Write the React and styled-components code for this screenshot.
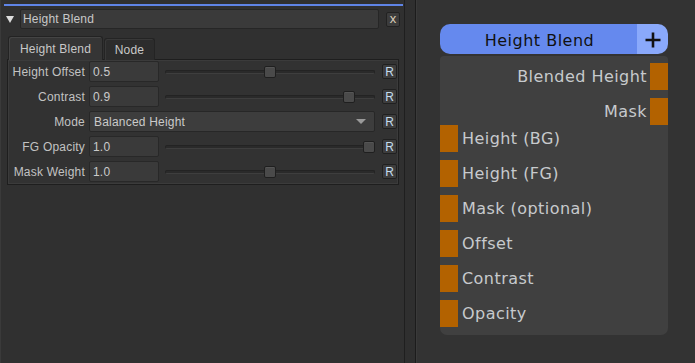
import React from "react";
import styled, { createGlobalStyle } from "styled-components";

const GlobalStyle = createGlobalStyle`
  html, body {
    margin: 0;
    padding: 0;
    background: #333333;
    overflow: hidden;
  }
  #root {
    width: 695px;
    height: 363px;
  }
`;

const Screen = styled.div`
  display: flex;
  width: 695px;
  height: 363px;
  font-family: "Liberation Sans", Arial, sans-serif;
  font-size: 12px;
  letter-spacing: 0.2px;
  color: #c4c4c4;
`;

const LeftPanel = styled.div`
  width: 405px;
  box-sizing: border-box;
  padding: 4px 1px 0 3px;
  background: #303030;
  border-left: 1px solid #3a3a3a;
  border-right: 1px solid #1f1f1f;
  display: flex;
  flex-direction: column;
`;

const BlueLine = styled.div`
  height: 2px;
  background: #5f84e6;
`;

const HeaderRow = styled.div`
  display: flex;
  align-items: center;
  height: 20px;
  margin-top: 3px;
`;

const Collapse = styled.div`
  width: 0;
  height: 0;
  margin: 0 6px 0 2px;
  border-left: 4px solid transparent;
  border-right: 4px solid transparent;
  border-top: 7px solid #dcdcdc;
`;

const TitleField = styled.div`
  flex: 1;
  height: 20px;
  box-sizing: border-box;
  display: flex;
  align-items: center;
  padding-left: 2px;
  background: #3a3a3a;
  border: 1px solid #262626;
  border-radius: 2px;
  color: #c8c8c8;
`;

const CloseButton = styled.div`
  width: 14px;
  height: 15px;
  box-sizing: border-box;
  margin: 0 3px 0 7px;
  display: flex;
  align-items: center;
  justify-content: center;
  background: #3c3c3c;
  border: 1px solid #222;
  border-radius: 2px;
  color: #d8cdb8;
  font-size: 13px;
  line-height: 1;
  padding-bottom: 2px;
`;

const TabBar = styled.div`
  display: flex;
  align-items: flex-end;
  margin-top: 7px;
  padding-left: 4px;
  height: 24px;
`;

const Tab = styled.div`
  height: ${p => (p.active ? "24px" : "22px")};
  width: ${p => p.width}px;
  box-sizing: border-box;
  margin-right: 1px;
  display: flex;
  align-items: center;
  justify-content: center;
  background: ${p => (p.active ? "#353535" : "#2c2c2c")};
  border: 1px solid ${p => (p.active ? "#232323" : "#242424")};
  border-bottom: none;
  border-radius: 3px 3px 0 0;
  box-shadow: inset 1px 1px 0 ${p => (p.active ? "#444" : "#383838")};
  color: #c8c8c8;
  position: relative;
  z-index: ${p => (p.active ? 2 : 1)};
`;

const Box = styled.div`
  margin: -1px 0 0 3px;
  width: 392px;
  box-sizing: border-box;
  border: 1px solid #1e1e1e;
  box-shadow: inset 0 0 0 1px #3b3b3b;
  background: #323232;
  padding: 1px 0 2px 0;
  display: flex;
  flex-direction: column;
  gap: 4px;
`;

const Row = styled.div`
  display: flex;
  align-items: center;
  height: 21px;
`;

const Label = styled.div`
  width: 77px;
  margin-right: 4px;
  text-align: right;
  white-space: nowrap;
  color: #c2c2c2;
`;

const ValueField = styled.div`
  width: 70px;
  height: 21px;
  box-sizing: border-box;
  display: flex;
  align-items: center;
  padding-left: 3px;
  background: #3a3a3a;
  border: 1px solid #282828;
  border-radius: 2px;
  color: #cacaca;
`;

const Slider = styled.div`
  position: relative;
  width: 210px;
  height: 12px;
  margin-left: 6px;
  display: flex;
  align-items: center;
`;

const Track = styled.div`
  width: 100%;
  height: 4px;
  box-sizing: border-box;
  background: #2a2a2a;
  border: 1px solid #232323;
  border-bottom-color: #3e3e3e;
  border-radius: 2px;
`;

const Thumb = styled.div`
  position: absolute;
  top: 0;
  width: 12px;
  height: 12px;
  box-sizing: border-box;
  background: #4a4a4a;
  border: 1px solid #1f1f1f;
  border-radius: 2px;
  box-shadow: inset 0 1px 0 #555;
`;

const Dropdown = styled.div`
  width: 286px;
  height: 21px;
  box-sizing: border-box;
  display: flex;
  align-items: center;
  justify-content: space-between;
  padding: 0 8px 0 4px;
  background: #3d3d3d;
  border: 1px solid #272727;
  border-radius: 2px;
  color: #cacaca;
`;

const Arrow = styled.div`
  width: 0;
  height: 0;
  border-left: 5px solid transparent;
  border-right: 5px solid transparent;
  border-top: 5px solid #9a9a9a;
`;

const ResetButton = styled.div`
  width: 15px;
  height: 15px;
  box-sizing: border-box;
  margin-left: 7px;
  display: flex;
  align-items: center;
  justify-content: center;
  background: #3d3d3d;
  border: 1px solid #202020;
  border-radius: 2px;
  color: #c4dcec;
  font-size: 12px;
  letter-spacing: 0;
`;

const Splitter = styled.div`
  width: 10px;
  background: #2f2f2f;
  border-right: 1px solid #1c1c1c;
`;

const Canvas = styled.div`
  flex: 1;
  position: relative;
  background: #333333;
  border-left: 1px solid #3a3a3a;
  font-family: "DejaVu Sans", Verdana, sans-serif;
`;

const Node = styled.div`
  position: absolute;
  left: 23px;
  top: 24px;
  width: 228px;
`;

const NodeHeader = styled.div`
  display: flex;
  height: 30px;
  border-radius: 10px;
  overflow: hidden;
`;

const NodeTitle = styled.div`
  flex: 1;
  display: flex;
  align-items: center;
  justify-content: center;
  padding: 3px 0 0 2px;
  background: #6589ee;
  color: #111;
  font-size: 16px;
  letter-spacing: 0.5px;
`;

const AddButton = styled.div`
  width: 31px;
  display: flex;
  align-items: center;
  justify-content: center;
  padding-top: 1px;
  background: #8aa9fb;
`;

const NodeBody = styled.div`
  margin-top: 2px;
  padding: 7px 0 8px;
  background: #404040;
  border-radius: 4px 4px 7px 7px;
  display: flex;
  flex-direction: column;
`;

const PortGroup = styled.div`
  display: flex;
  flex-direction: column;
  gap: 8px;
`;

const PortRow = styled.div`
  display: flex;
  align-items: center;
  justify-content: ${p => (p.output ? "flex-end" : "flex-start")};
  height: 27px;
  font-size: 16px;
  letter-spacing: 0.45px;
  color: #c7cacd;
`;

const Port = styled.div`
  width: 18px;
  height: 27px;
  background: #b36200;
  margin: ${p => (p.output ? "0 0 0 3px" : "0 4px 0 0")};
`;

const params = [
  { label: "Height Offset", value: 0.5, pos: 0.5 },
  { label: "Contrast", value: 0.9, pos: 0.9 },
  { label: "Mode", mode: "Balanced Height" },
  { label: "FG Opacity", value: 1.0, pos: 1.0 },
  { label: "Mask Weight", value: 1.0, pos: 0.5 },
];

const outputs = ["Blended Height", "Mask"];
const inputs = [
  "Height (BG)",
  "Height (FG)",
  "Mask (optional)",
  "Offset",
  "Contrast",
  "Opacity",
];

const ParamRow = ({ param }) => (
  <Row>
    <Label>{param.label}</Label>
    {param.mode ? (
      <Dropdown>
        {param.mode}
        <Arrow />
      </Dropdown>
    ) : (
      <>
        <ValueField>{param.value.toFixed(1)}</ValueField>
        <Slider>
          <Track />
          <Thumb style={{ left: `calc(${param.pos} * (100% - 12px))` }} />
        </Slider>
      </>
    )}
    <ResetButton>R</ResetButton>
  </Row>
);

export default function App() {
  return (
    <>
      <GlobalStyle />
      <Screen>
        <LeftPanel>
          <BlueLine />
          <HeaderRow>
            <Collapse />
            <TitleField>Height Blend</TitleField>
            <CloseButton>x</CloseButton>
          </HeaderRow>
          <TabBar>
            <Tab active width={95}>Height Blend</Tab>
            <Tab width={51}>Node</Tab>
          </TabBar>
          <Box>
            {params.map(p => (
              <ParamRow key={p.label} param={p} />
            ))}
          </Box>
        </LeftPanel>
        <Splitter />
        <Canvas>
          <Node>
            <NodeHeader>
              <NodeTitle>Height Blend</NodeTitle>
              <AddButton>
                <svg width="16" height="16" viewBox="0 0 16 16">
                  <path d="M8 0.5v15M0.5 8h15" stroke="#111" strokeWidth="2.6" />
                </svg>
              </AddButton>
            </NodeHeader>
            <NodeBody>
              <PortGroup>
                {outputs.map(o => (
                  <PortRow output key={o}>
                    {o}
                    <Port output />
                  </PortRow>
                ))}
              </PortGroup>
              <PortGroup>
                {inputs.map(i => (
                  <PortRow key={i}>
                    <Port />
                    {i}
                  </PortRow>
                ))}
              </PortGroup>
            </NodeBody>
          </Node>
        </Canvas>
      </Screen>
    </>
  );
}
